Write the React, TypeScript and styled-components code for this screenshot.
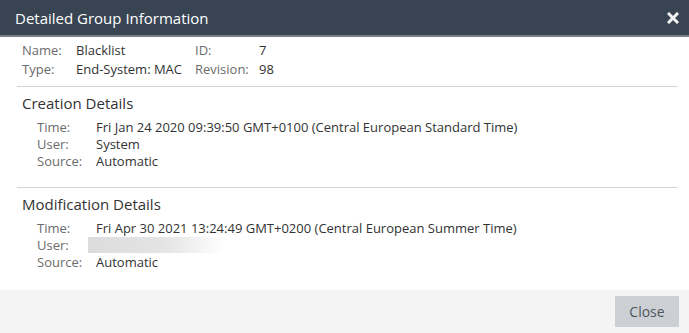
import React from "react";
import styled, { createGlobalStyle } from "styled-components";

const Global = createGlobalStyle`
  html, body { margin: 0; padding: 0; background: #fff; }
  body { font-family: "Open Sans", "Noto Sans", sans-serif; }
`;

const Dialog = styled.div`
  width: 689px;
  height: 333px;
  display: flex;
  flex-direction: column;
  background: #fff;
`;

const Header = styled.div`
  height: 37px;
  box-sizing: border-box;
  background: #394453;
  border-bottom: 2px solid #7a7f86;
  display: flex;
  align-items: center;
  justify-content: space-between;
  padding: 0 9px 0 15px;
`;

const Title = styled.div`
  color: #fff;
  font-size: 15px;
  line-height: 20px;
`;

const CloseX = styled.button`
  border: none;
  background: none;
  padding: 0;
  width: 14px;
  height: 14px;
  display: flex;
  align-items: center;
  justify-content: center;
  cursor: pointer;
`;

const Body = styled.div`
  flex: 1;
  padding: 4px 11px 0 17px;
`;

const InfoGrid = styled.div`
  display: grid;
  grid-template-columns: 54px 119px 64px auto;
  padding: 0 0 0 5px;
  font-size: 13px;
  line-height: 19px;
  padding-bottom: 7px;
  border-bottom: 1px solid #d4d4d4;
`;

const Label = styled.div`
  color: #6b6b6b;
  white-space: nowrap;
`;

const Value = styled.div`
  color: #333;
  white-space: nowrap;
`;

const Section = styled.div<{ $divider?: boolean }>`
  padding: 6px 0 0 5px;
  height: ${(p) => (p.$divider ? "101px" : "auto")};
  box-sizing: border-box;
  border-bottom: ${(p) => (p.$divider ? "1px solid #d4d4d4" : "none")};
`;

const SectionTitle = styled.div`
  color: #333;
  font-size: 15px;
  line-height: 20px;
  margin-bottom: 6px;
`;

const DetailGrid = styled.div`
  display: grid;
  grid-template-columns: 59px auto;
  padding-left: 15px;
  font-size: 13px;
  line-height: 17px;
`;

const Redacted = styled.div`
  width: 137px;
  height: 16px;
  margin-left: -8px;
  background: linear-gradient(to right, #dcdcdc 0%, #e4e4e4 55%, #ffffff 100%);
`;

const Footer = styled.div`
  height: 43px;
  background: #f4f4f4;
  display: flex;
  justify-content: flex-end;
  align-items: flex-start;
  padding: 6px 10px 0 0;
  box-sizing: border-box;
`;

const Button = styled.button`
  width: 64px;
  height: 31px;
  border: none;
  background: #ccd0d4;
  color: #4f5660;
  font-family: "Open Sans", sans-serif;
  font-size: 14px;
  cursor: pointer;
`;

export default function App() {
  return (
    <>
      <Global />
      <Dialog>
        <Header>
          <Title>Detailed Group Information</Title>
          <CloseX aria-label="close">
            <svg width="12" height="12" viewBox="0 0 12 12">
              <path d="M2 2 L10 10 M10 2 L2 10" stroke="#f2f2f2" strokeWidth="3" strokeLinecap="square" />
            </svg>
          </CloseX>
        </Header>
        <Body>
          <InfoGrid>
            <Label>Name:</Label>
            <Value>Blacklist</Value>
            <Label>ID:</Label>
            <Value>7</Value>
            <Label>Type:</Label>
            <Value>End-System: MAC</Value>
            <Label>Revision:</Label>
            <Value>98</Value>
          </InfoGrid>
          <Section $divider>
            <SectionTitle>Creation Details</SectionTitle>
            <DetailGrid>
              <Label>Time:</Label>
              <Value>Fri Jan 24 2020 09:39:50 GMT+0100 (Central European Standard Time)</Value>
              <Label>User:</Label>
              <Value>System</Value>
              <Label>Source:</Label>
              <Value>Automatic</Value>
            </DetailGrid>
          </Section>
          <Section>
            <SectionTitle>Modification Details</SectionTitle>
            <DetailGrid>
              <Label>Time:</Label>
              <Value>Fri Apr 30 2021 13:24:49 GMT+0200 (Central European Summer Time)</Value>
              <Label>User:</Label>
              <Value><Redacted /></Value>
              <Label>Source:</Label>
              <Value>Automatic</Value>
            </DetailGrid>
          </Section>
        </Body>
        <Footer>
          <Button>Close</Button>
        </Footer>
      </Dialog>
    </>
  );
}
